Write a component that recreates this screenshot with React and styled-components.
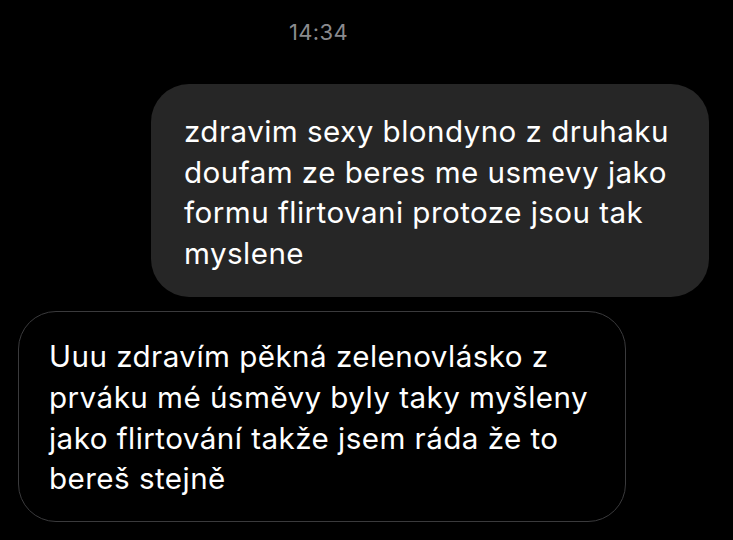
import React from 'react'
import styled, { createGlobalStyle } from 'styled-components'

const Global = createGlobalStyle`
  html, body {
    margin: 0;
    background: #000;
  }
  body {
    font-family: Inter, "Noto Sans", sans-serif;
    -webkit-font-smoothing: antialiased;
  }
`

const Thread = styled.div`
  width: 733px;
  height: 540px;
  overflow: hidden;
  background: #000;
  display: flex;
  flex-direction: column;
  padding-top: 19px;
  box-sizing: border-box;
`

const Time = styled.div`
  align-self: center;
  margin-right: 96px;
  color: #8a8a8e;
  font-size: 22px;
  letter-spacing: 0.3px;
  line-height: 26px;
  margin-bottom: 39px;
`

const Bubble = styled.div`
  box-sizing: border-box;
  width: ${p => p.$w}px;
  align-self: ${p => (p.$mine ? 'flex-end' : 'flex-start')};
  margin: ${p => (p.$mine ? '0 24px 14px 0' : '0 0 0 18px')};
  padding: ${p => (p.$mine ? '27px 20px 24px 33px' : '24px 20px 22px 30px')};
  border-radius: 38px;
  background: ${p => (p.$mine ? '#262626' : '#000')};
  border: ${p => (p.$mine ? 'none' : '1.5px solid #3a3a3c')};
  color: #fff;
  font-size: 29.6px;
  letter-spacing: 0.45px;
  line-height: 40.6px;
  white-space: pre-line;
`

export default function App() {
  return (
    <>
      <Global />
      <Thread>
        <Time>14:34</Time>
        <Bubble $mine $w={558}>
          {'zdravim sexy blondyno z druhaku\ndoufam ze beres me usmevy jako\nformu flirtovani protoze jsou tak\nmyslene'}
        </Bubble>
        <Bubble $w={608}>
          {'Uuu zdravím pěkná zelenovlásko z\nprváku mé úsměvy byly taky myšleny\njako flirtování takže jsem ráda že to\nbereš stejně'}
        </Bubble>
      </Thread>
    </>
  )
}
